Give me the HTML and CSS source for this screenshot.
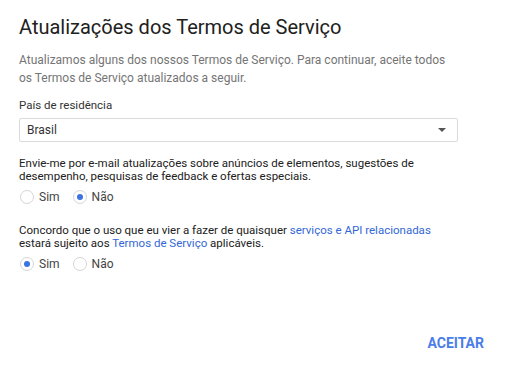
FILE: index.html
```html
<!DOCTYPE html>
<html lang="pt-br">

<head>
    <meta charset="UTF-8">
    <title>Atualizações dos Termos de Serviço</title>
    <link rel="stylesheet" href="styles.css">
</head>

<body>
    <div class="dialog">
        <h2>Atualizações dos Termos de Serviço</h2>
        <p class="intro">
            Atualizamos alguns dos nossos Termos de Serviço. Para continuar, aceite todos
            os Termos de Serviço atualizados a seguir.
        </p>

        <div class="field">
            <label class="field-label">País de residência</label>
            <div class="select">
                <span>Brasil</span>
                <span class="arrow"></span>
            </div>
        </div>

        <div class="question">
            <p>Envie-me por e-mail atualizações sobre anúncios de elementos, sugestões de
                desempenho, pesquisas de feedback e ofertas especiais.</p>
            <div class="radios">
                <label class="radio"><span class="dot"></span>Sim</label>
                <label class="radio"><span class="dot checked"></span>Não</label>
            </div>
        </div>

        <div class="question">
            <p>Concordo que o uso que eu vier a fazer de quaisquer <a href="#">serviços e API relacionadas</a>
                estará sujeito aos <a href="#">Termos de Serviço</a> aplicáveis.</p>
            <div class="radios">
                <label class="radio"><span class="dot checked"></span>Sim</label>
                <label class="radio"><span class="dot"></span>Não</label>
            </div>
        </div>

        <div class="actions">
            <button class="btn" type="button">ACEITAR</button>
        </div>
    </div>
</body>

</html>
```

FILE: styles.css
```css
body {
    margin: 0;
    font-family: Roboto, 'Liberation Sans', sans-serif;
    background: #fff;
    color: #212121;
}

.dialog {
    width: 505px;
    height: 366px;
    box-sizing: border-box;
    padding: 12px 13px 7px 19px;
    display: flex;
    flex-direction: column;
}

h2 {
    margin: 0;
    font-size: 20px;
    font-weight: 400;
    line-height: 30px;
    color: #212121;
}

.intro {
    margin: 9px 0 0;
    max-width: 435px;
    font-size: 12px;
    line-height: 18px;
    color: #757575;
}

.field {
    margin-top: 11px;
}

.field-label {
    display: block;
    font-size: 11.5px;
    line-height: 14px;
    color: #333;
    margin-bottom: 6px;
}

.select {
    width: 439px;
    height: 24px;
    box-sizing: border-box;
    border: 1px solid #dadada;
    border-radius: 2px;
    display: flex;
    align-items: center;
    justify-content: space-between;
    padding: 0 8px 0 7px;
    font-size: 12px;
    color: #333;
}

.arrow {
    width: 0;
    height: 0;
    border-left: 4px solid transparent;
    border-right: 4px solid transparent;
    border-top: 4px solid #555;
    margin-right: 3px;
}

.question {
    margin-top: 15px;
}

.question + .question {
    margin-top: 18px;
}

.question p {
    margin: 0;
    max-width: 420px;
    font-size: 11.5px;
    line-height: 13px;
    color: #212121;
}

.question a {
    color: #3367d6;
    text-decoration: none;
}

.radios {
    display: flex;
    gap: 13px;
    margin-top: 5px;
    padding-left: 1px;
}

.radio {
    display: flex;
    align-items: center;
    font-size: 12px;
    line-height: 18px;
    color: #444;
}

.dot {
    width: 12px;
    height: 12px;
    border: 1px solid #d5d5d5;
    border-radius: 50%;
    margin-right: 5px;
    position: relative;
}

.dot.checked::after {
    content: "";
    position: absolute;
    left: 3px;
    top: 3px;
    width: 6px;
    height: 6px;
    border-radius: 50%;
    background: #3b73e0;
}

.actions {
    margin-top: auto;
    display: flex;
    justify-content: flex-end;
}

.btn {
    background: none;
    border: none;
    font-family: inherit;
    font-size: 14px;
    font-weight: 700;
    line-height: 16px;
    color: #4a7de8;
    padding: 8px 8px;
    cursor: pointer;
}
```
